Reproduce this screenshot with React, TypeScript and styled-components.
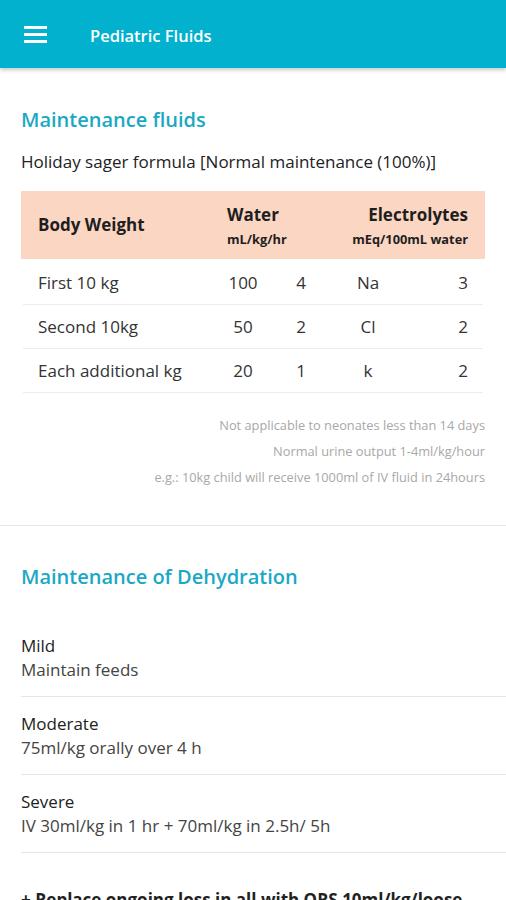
import styled, { createGlobalStyle } from "styled-components";

const GlobalStyle = createGlobalStyle`
  html, body {
    margin: 0;
    padding: 0;
    background: #ffffff;
  }
  body {
    font-family: "Open Sans", "Noto Sans", sans-serif;
    color: #222;
  }
  * {
    box-sizing: border-box;
  }
`;

const Page = styled.div`
  width: 506px;
  height: 900px;
  overflow: hidden;
  background: #fff;
`;

const AppBar = styled.header`
  height: 68px;
  background: #02b1cd;
  display: flex;
  align-items: center;
  padding-left: 24px;
  padding-top: 2px;
  box-shadow: 0 2px 4px rgba(0, 0, 0, 0.22);
  position: relative;
  z-index: 1;
`;

const MenuButton = styled.button`
  border: 0;
  background: none;
  padding: 0;
  width: 23px;
  height: 18px;
  display: flex;
  margin-right: 43px;
`;

const AppTitle = styled.h1`
  margin: 0;
  font-size: 16.5px;
  font-weight: 600;
  color: #fff;
`;

const Section = styled.section<{ $top: number }>`
  padding: ${(p) => p.$top}px 21px 0;
`;

const SectionTitle = styled.h2`
  margin: 0;
  font-size: 20px;
  line-height: 26px;
  font-weight: 600;
  color: #1aa8c4;
`;

const Lead = styled.p`
  margin: 17px 0 17px;
  font-size: 17px;
  line-height: 24px;
  color: #222;
`;

const cols = "172px 66px 50px 84px 1fr";

const TableHead = styled.div`
  height: 68px;
  background: #fbd6c3;
  display: grid;
  grid-template-columns: ${cols};
  align-items: center;
  padding: 0 17px 0 17px;
  color: #1e1e1e;
`;

const HeadCell = styled.div<{ $span?: number; $right?: boolean; $indent?: number }>`
  grid-column: span ${(p) => p.$span ?? 1};
  text-align: ${(p) => (p.$right ? "right" : "left")};
  padding-left: ${(p) => p.$indent ?? 0}px;
  font-size: 17px;
  font-weight: 700;
  line-height: 22px;
`;

const HeadSub = styled.div`
  font-size: 12.8px;
  font-weight: 700;
  line-height: 16px;
  margin-top: 5px;
`;

const TableBody = styled.div`
  padding-top: 2px;
`;

const Row = styled.div`
  height: 44px;
  display: grid;
  grid-template-columns: ${cols};
  align-items: center;
  padding: 0 15px;
  margin: 0 2px;
  border-bottom: 1px solid #ececec;
  font-size: 17px;
  color: #333;
`;

const Cell = styled.div<{ $align?: "left" | "center" | "right" }>`
  text-align: ${(p) => p.$align ?? "left"};
`;

const Notes = styled.div`
  margin-top: 19px;
  display: flex;
  flex-direction: column;
  align-items: flex-end;
`;

const Note = styled.span`
  font-size: 12.8px;
  line-height: 26px;
  color: #a8a8a8;
`;

const Divider = styled.hr`
  margin: 35px 0 0;
  border: 0;
  border-top: 1px solid #e6e6e6;
`;

const List = styled.div`
  margin-top: 29px;
  margin-right: -21px;
`;

const Item = styled.div`
  padding: 15px 0 14px;
  border-bottom: 1px solid #e6e6e6;
  font-size: 17px;
  line-height: 24px;
`;

const ItemLabel = styled.div`
  color: #222;
`;

const ItemText = styled.div`
  color: #444;
`;

const Footnote = styled.p`
  margin: 35px 0 0;
  font-size: 17px;
  line-height: 24px;
  font-weight: 700;
  color: #222;
`;

const rows = [
  ["First 10 kg", "100", "4", "Na", "3"],
  ["Second 10kg", "50", "2", "Cl", "2"],
  ["Each additional kg", "20", "1", "k", "2"],
];

const items = [
  ["Mild", "Maintain feeds"],
  ["Moderate", "75ml/kg orally over 4 h"],
  ["Severe", "IV 30ml/kg in 1 hr + 70ml/kg in 2.5h/ 5h"],
];

function MenuIcon() {
  return (
    <svg width="23" height="18" viewBox="0 0 23 18">
      <rect x="0" y="0" width="23" height="3" fill="#fff" />
      <rect x="0" y="7" width="23" height="3" fill="#fff" />
      <rect x="0" y="14" width="23" height="3" fill="#fff" />
    </svg>
  );
}

export default function App() {
  return (
    <Page>
      <GlobalStyle />
      <AppBar>
        <MenuButton aria-label="menu">
          <MenuIcon />
        </MenuButton>
        <AppTitle>Pediatric Fluids</AppTitle>
      </AppBar>

      <Section $top={39}>
        <SectionTitle>Maintenance fluids</SectionTitle>
        <Lead>Holiday sager formula [Normal maintenance (100%)]</Lead>
        <TableHead>
          <HeadCell>Body Weight</HeadCell>
          <HeadCell $span={2} $indent={17}>
            Water
            <HeadSub>mL/kg/hr</HeadSub>
          </HeadCell>
          <HeadCell $span={2} $right>
            Electrolytes
            <HeadSub>mEq/100mL water</HeadSub>
          </HeadCell>
        </TableHead>
        <TableBody>
          {rows.map((r) => (
            <Row key={r[0]}>
              <Cell>{r[0]}</Cell>
              <Cell $align="center">{r[1]}</Cell>
              <Cell $align="center">{r[2]}</Cell>
              <Cell $align="center">{r[3]}</Cell>
              <Cell $align="right">{r[4]}</Cell>
            </Row>
          ))}
        </TableBody>
        <Notes>
          <Note>Not applicable to neonates less than 14 days</Note>
          <Note>Normal urine output 1-4ml/kg/hour</Note>
          <Note>e.g.: 10kg child will receive 1000ml of IV fluid in 24hours</Note>
        </Notes>
      </Section>

      <Divider />

      <Section $top={38}>
        <SectionTitle>Maintenance of Dehydration</SectionTitle>
        <List>
          {items.map(([label, text]) => (
            <Item key={label}>
              <ItemLabel>{label}</ItemLabel>
              <ItemText>{text}</ItemText>
            </Item>
          ))}
        </List>
        <Footnote>+ Replace ongoing loss in all with ORS 10ml/kg/loose stool</Footnote>
      </Section>
    </Page>
  );
}
